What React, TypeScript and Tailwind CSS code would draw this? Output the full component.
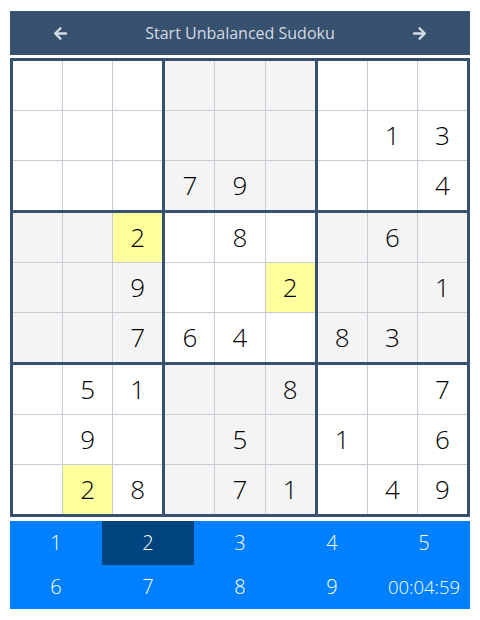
import React from "react";
import { FaArrowLeft, FaArrowRight } from "react-icons/fa";

const rows: string[] = [
  ".........",
  ".......13",
  "...79...4",
  "..2.8..6.",
  "..9..2..1",
  "..764.83.",
  ".51..8..7",
  ".9..5.1.6",
  ".28.71.49",
];

const yellow = new Set(["3-2", "4-5", "8-1"]);

function Cell({ r, c }: { r: number; c: number }) {
  const v = rows[r][c];
  const boxShaded = (Math.floor(r / 3) + Math.floor(c / 3)) % 2 === 1;
  const isYellow = yellow.has(`${r}-${c}`);
  const bg = isYellow ? "bg-[#ffff9e]" : boxShaded ? "bg-[#f4f4f4]" : "bg-white";
  return (
    <div
      className={`${bg} h-[49px] flex items-center justify-center text-[26px] font-light text-black`}
      style={{ fontFamily: '"Open Sans", "Noto Sans", sans-serif' }}
    >
      {v === "." ? "" : v}
    </div>
  );
}

function Box({ br, bc }: { br: number; bc: number }) {
  const cells = [];
  for (let i = 0; i < 3; i++) {
    for (let j = 0; j < 3; j++) {
      cells.push(<Cell key={`${i}-${j}`} r={br * 3 + i} c={bc * 3 + j} />);
    }
  }
  return <div className="grid grid-cols-3 gap-px bg-[#c4ccd6]">{cells}</div>;
}

export default function App() {
  const boxes = [];
  for (let i = 0; i < 3; i++) {
    for (let j = 0; j < 3; j++) {
      boxes.push(<Box key={`${i}-${j}`} br={i} bc={j} />);
    }
  }
  const pad = ["1", "2", "3", "4", "5", "6", "7", "8", "9", "00:04:59"];
  return (
    <div
      className="w-[480px] h-[620px] bg-white pt-[11px] px-[10px] flex flex-col"
      style={{ fontFamily: '"Open Sans", "Noto Sans", sans-serif' }}
    >
      <div className="h-[44px] bg-[#37516f] flex items-center justify-between px-[43px] text-[#d5dbe3]">
        <FaArrowLeft size={15} />
        <span className="text-[16px]">Start Unbalanced Sudoku</span>
        <FaArrowRight size={15} />
      </div>
      <div className="mt-[3px] bg-[#36506f] p-[3px] grid grid-cols-3 gap-[3px]">{boxes}</div>
      <div className="mt-[4px] bg-[#0080ff] grid grid-cols-5">
        {pad.map((p, i) => (
          <div
            key={i}
            className={`h-[44px] flex items-center justify-center font-light text-white ${
              i === 9 ? "text-[18.5px]" : "text-[20px]"
            } ${p === "2" ? "bg-[#00447f]" : ""}`}
          >
            {p}
          </div>
        ))}
      </div>
    </div>
  );
}
